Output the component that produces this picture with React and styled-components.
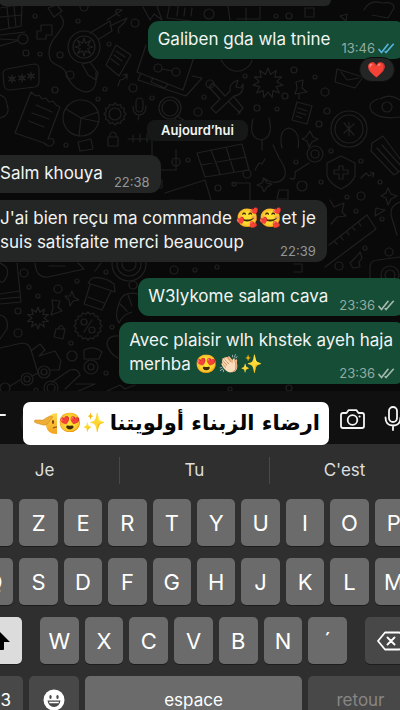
import React from "react";
import styled, { createGlobalStyle } from "styled-components";

const GlobalStyle = createGlobalStyle`
  *, *::before, *::after { box-sizing: border-box; }
  body {
    margin: 0;
    background: #0a0a0a;
    color: #f2f4f3;
    font-family: Inter, "Noto Sans", sans-serif;
    overflow: hidden;
  }
  button { font-family: inherit; color: inherit; border: 0; padding: 0; background: none; }
`;

const Screen = styled.div`
  display: flex;
  flex-direction: column;
  height: 100vh;
  min-height: 640px;
  overflow: hidden;
`;

/* ---------- chat ---------- */

const Chat = styled.main`
  position: relative;
  display: flex;
  flex-direction: column;
  flex: none;
  padding-bottom: 7px;
  overflow: hidden;
  background: #090909;
`;

const Wallpaper = styled.svg`
  position: absolute;
  inset: 0;
  width: 100%;
  height: 100%;
  fill: none;
  stroke: #202020;
  stroke-width: 1.2;
  stroke-linejoin: round;
  stroke-linecap: round;
`;

const Bubble = styled.article`
  position: relative;
  align-self: ${(p) => (p.$out ? "flex-end" : "flex-start")};
  margin: ${(p) => p.$gap || 0}px ${(p) => (p.$out ? -6 : 0)}px 0 ${(p) => (p.$out ? 0 : -10)}px;
  padding: 6px ${(p) => (p.$out ? 13 : 11)}px 8px 10px;
  border-radius: 11px;
  background: ${(p) => (p.$out ? "#154d37" : "#232625")};
  font-size: 17px;
  line-height: 24px;
  white-space: nowrap;
`;

const PastBubble = styled.div`
  position: relative;
  width: 83%;
  height: 6px;
  margin-left: -1px;
  border-radius: 0 0 11px 11px;
  background: #232625;
`;

const LastLine = styled.div`
  display: flex;
  align-items: flex-end;
  justify-content: space-between;
  gap: 11px;
`;

const Meta = styled.span`
  display: flex;
  align-items: center;
  gap: 3px;
  margin: 0 ${(p) => (p.$out ? -2 : 0)}px -4px 0;
  font-size: 13px;
  line-height: 14px;
  color: ${(p) => (p.$out ? "#93aba1" : "#949796")};
`;

const Emoji = styled.span`
  font-family: "Noto Color Emoji", sans-serif;
  font-size: 18px;
  line-height: 20px;
`;

const Reaction = styled.div`
  position: absolute;
  right: 11px;
  bottom: -23px;
  display: flex;
  align-items: center;
  justify-content: center;
  width: 36px;
  height: 25px;
  border: 1px solid #0d0f0e;
  border-radius: 13px;
  background: #232625;
  font: 15px/20px "Noto Color Emoji", sans-serif;
`;

const DayPill = styled.div`
  position: relative;
  align-self: center;
  margin: 61px 5px 0 0;
  padding: 0 14px;
  border-radius: 8px;
  background: #161717;
  font-size: 13px;
  font-weight: 600;
  line-height: 21px;
`;

/* ---------- composer ---------- */

const Composer = styled.form`
  position: relative;
  z-index: 1;
  display: flex;
  align-items: center;
  flex: none;
  height: 53px;
  margin: 0 -2px 0 -14px;
  padding-top: 6px;
  background: #101010;
`;

const IconButton = styled.button`
  display: flex;
  align-items: center;
  flex: none;
  margin-bottom: 4px;
  svg { display: block; fill: none; stroke: #f4f4f4; stroke-width: 2; stroke-linecap: round; stroke-linejoin: round; }
`;

const AddButton = styled(IconButton)`
  margin-bottom: 12px;
`;

const Field = styled.label`
  position: relative;
  flex: 1;
  margin: 2px 11px 0 15px;
`;

const TextBox = styled.input`
  display: block;
  width: 100%;
  height: 36px;
  border: 1px solid #242424;
  border-radius: 18px;
  background: #1a1a1a;
  outline: 0;
`;

const Caption = styled.p`
  position: absolute;
  inset: -2px 0 -5px 2px;
  display: flex;
  align-items: center;
  justify-content: flex-start;
  gap: 4px;
  margin: 0;
  padding: 0 9px;
  border-radius: 7px;
  background: #fff;
  color: #050505;
  font: 700 21px/36px "DejaVu Sans", sans-serif;
  white-space: nowrap;
  ${Emoji} { display: flex; align-items: center; font-size: 19px; font-weight: 400; }
`;

const Tools = styled.div`
  display: flex;
  align-items: center;
  gap: 19px;
`;

/* ---------- keyboard ---------- */

const Keyboard = styled.section`
  flex: 1;
  display: flex;
  flex-direction: column;
  gap: 12px;
  background: #2f2f2f;
`;

const Suggestions = styled.div`
  display: flex;
  align-items: center;
  flex: none;
  height: 43px;
  padding-top: 9px;
  margin: 0 -19px 0 -30px;
`;

const Suggestion = styled.button`
  flex: 1;
  height: 27px;
  font-size: 17px;
  line-height: 27px;
  color: #dedede;
  & + & { border-left: 1px solid #484848; }
`;

const KeyRow = styled.div`
  display: flex;
  flex: none;
  gap: 6px;
  margin: 0 -13px 0 -25px;
`;

const KeyGroup = styled.div`
  display: flex;
  flex: 1;
  gap: 6px;
  margin: 0 12px;
`;

const Key = styled.button`
  display: flex;
  align-items: center;
  justify-content: ${(p) => p.$align || "center"};
  flex: ${(p) => (p.$width ? `0 0 ${p.$width}px` : "1 1 0")};
  min-width: 0;
  height: 47px;
  border-radius: 5px;
  background: ${(p) => ({ dark: "#484848", light: "#dcdcdc" }[p.$tone] || "#6b6b6b")};
  box-shadow: 0 1px 0 #1d1d1d;
  color: ${(p) => (p.$dim ? "#868686" : "#fff")};
  font-size: ${(p) => (p.$word ? 17 : 22)}px;
  font-weight: 400;
  ${(p) => p.$pad && `padding: ${p.$pad};`}
`;

const Ticks = ({ color }) => (
  <svg width="17" height="11" viewBox="0 0 17 11" fill="none" stroke={color} strokeWidth="1.7" strokeLinecap="round" strokeLinejoin="round" aria-label="Distribué">
    <path d="M1 6.5 3.5 9.5 10 1.3M7.3 8.7 8 9.5 15.3 1.3" />
  </svg>
);

const burst = (cx, cy, outer, inner, n) => {
  const pts = [];
  for (let i = 0; i < n * 2; i += 1) {
    const r = i % 2 ? inner : outer;
    const a = (Math.PI * i) / n;
    pts.push(`${(cx + r * Math.sin(a)).toFixed(1)} ${(cy - r * Math.cos(a)).toFixed(1)}`);
  }
  return `M${pts.join("L")}Z`;
};

const dots = [
  [35, 16, 2], [78, 21, 2], [84, 7, 4], [135, 23, 4], [26, 53, 3], [40, 54, 2], [60, 55, 3], [109, 44, 2],
  [209, 14, 5], [276, 16, 2], [289, 16, 3], [55, 90, 3], [70, 75, 4], [98, 99, 2], [105, 89, 2], [133, 88, 4],
  [152, 98, 2], [204, 97, 2], [198, 112, 4], [210, 84, 4], [245, 76, 2], [257, 108, 3], [285, 96, 3], [294, 70, 3],
  [315, 77, 2], [325, 92, 4], [327, 111, 3], [277, 109, 2], [66, 145, 2], [319, 124, 3], [188, 160, 2],
  [247, 174, 4], [218, 188, 3], [302, 186, 5], [296, 162, 2], [331, 151, 2], [361, 161, 2], [321, 182, 2],
  [380, 182, 2], [361, 196, 4], [347, 197, 2], [356, 211, 2], [24, 273, 4], [29, 287, 2], [38, 296, 2], [58, 289, 4],
  [77, 281, 2], [106, 272, 2], [133, 285, 4], [18, 311, 3], [18, 333, 4], [71, 343, 2], [112, 327, 2], [72, 356, 5],
  [106, 373, 2], [382, 219, 2], [389, 252, 4], [365, 248, 2], [339, 266, 4], [174, 270, 4], [195, 270, 2], [217, 267, 2],
  [36, 390, 2], [176, 162, 4], [289, 388, 3], [230, 389, 2],
];

const Doodles = () => (
  <Wallpaper viewBox="0 0 400 392" preserveAspectRatio="xMidYMin slice" aria-hidden="true">
    {dots.map(([x, y, r]) => <circle key={`${x}-${y}`} cx={x} cy={y} r={r} />)}
    {/* basket, pixels and cable */}
    <path d="M0 8 22 4 21 26 0 30M7 7 9 28M14 6 16 27M0 17 22 15M0 35 25 32M0 39 17 40M0 46 17 41" />
    <circle cx="23" cy="39" r="5" />
    <path d="M41 25H52V35H46V39H37V31H41Z" />
    <path d="M48 8 57 5 62 11 54 17ZM60 15C72 28 49 35 49 52 49 69 62 62 66 73 71 91 93 100 96 82V72" />
    {/* lens with handle and wrench */}
    <circle cx="84" cy="47" r="16" /><circle cx="84" cy="47" r="11" /><path d={burst(84, 47, 9, 4, 8)} />
    <path d="M82 64 90 62 98 73 96 80 88 75ZM90 33 110 21 112 31 99 39M107 20 122 10C114 7 114 14 120 16M110 26 127 18C122 29 116 25 119 33" />
    <path d="M116 45 131 55 119 76 106 65ZM116 51 125 57M114 55 122 61M111 59 119 65" />
    <path d="M118 86 120 80 124 79 127 74M123 75 127 74 127 79" />
    {/* code box */}
    <path d="M7 69 34 64Q39 64 39 69L39 82Q39 86 35 87L10 90Q5 90 4 85L3 74Q3 70 7 69Z" />
    <path d={burst(12, 79, 4, 1, 6)} /><path d={burst(22, 78, 4, 1, 6)} /><path d={burst(31, 76, 4, 1, 6)} />
    {/* receipt, chart, gear */}
    <path d="M31 92 36 96 39 95 42 99 46 98 49 102 53 101 56 105 60 107 48 139Q54 137 54 143 50 149 44 143L15 133ZM36 105 52 112M32 113 49 119M29 121 44 127" />
    <circle cx="81" cy="118" r="18" /><path d="M81 118 66 109M81 118 79 136M81 118 98 112M81 118 99 122" />
    <path d={burst(115, 114, 11, 9, 12)} /><circle cx="115" cy="114" r="6" />
    <rect x="136" y="98" width="7" height="14" rx="4" /><path d="M133 106Q133 115 139 115 146 115 146 106M139 115 138 120" />
    <path d="M108 137H118V146H108ZM110 137V134Q113 130 116 134V137" />
    <circle cx="170" cy="108" r="11" /><circle cx="170" cy="108" r="8" /><path d="M177 116 185 121 181 126 175 119M0 95Q7 97 7 105 11 115 0 118" />
    {/* laptop */}
    <path d="M146 45 137 72 183 90 194 57M141 73 138 80 186 96 202 78 192 76M153 78 168 84 165 88 151 82Z" />
    <circle cx="158" cy="68" r="4" /><circle cx="176" cy="72" r="4" /><path d="M162 69 172 71" />
    <path d="M143 7 150 20 154 14 162 20 157 6M170 3 167 18 198 22M178 6 177 16M185 8 184 16M192 8 191 16M230 20 228 6M237 19H260V7M246 8V20" />
    {/* crossed tools */}
    <path d="M209 87 213 83 225 96 230 91Q229 83 238 80L236 87 241 88 243 84Q244 95 234 96L216 113 211 108 220 99ZM229 102 240 113M234 97 243 108 238 114" />
    <path d={burst(268, 83, 15, 9, 11)} />
    <path d="M221 60Q230 75 243 70 251 66 252 60M337 69 363 77 355 88 335 82ZM341 72 347 80 359 78" />
    <path d="M296 82 303 80 302 88 307 92 295 94 297 88ZM299 94 299 99" />
    <path d="M297 102 312 106 307 124 292 120ZM298 108 307 111M297 112 306 115M296 116 302 118" />
    <circle cx="349" cy="129" r="18" /><circle cx="349" cy="129" r="14" /><path d="M344 123 354 135M354 124 344 133M349 122V136" />
    <path d="M305 8H314V17H305ZM340 16 347 14 346 21ZM364 10Q370 -1 382 3 394 1 394 8L388 18 372 15M380 99Q390 93 400 100M372 112Q366 103 378 99M372 112Q381 120 400 117" />
    <circle cx="387" cy="107" r="5" />
    {/* stethoscope and steps */}
    <path d="M253 119Q248 138 261 140 274 138 269 118M262 140V150M282 148Q278 130 289 128 301 131 298 148M306 137 310 131 313 137 318 139 312 142 309 147 307 141 302 139Z" />
    <path d="M128 139H152V170H176V150M133 135V142M140 134V142M147 134V142M197 153 242 144 249 170 205 177ZM211 150 220 174M226 147 234 172M201 165 246 157M78 142 91 139 93 149 80 151Z" />
    <path d="M255 170 259 163 262 164 265 159M263 178Q276 186 283 179 289 172 279 158L273 145M290 178Q296 182 295 172L309 163" />
    <circle cx="315" cy="154" r="8" /><circle cx="315" cy="154" r="4" />
    <path d="M341 156 355 163V176Q352 184 341 189 330 184 327 176V163ZM339 166H343V170H348V174H343V179H339V174H334V170H339ZM361 178 366 173 369 176 374 173M370 172 374 173 373 177" />
    <path d="M372 143 383 136 400 159M372 143 371 151 394 175 400 171M377 148 398 171M382 145 400 165" />
    <path d="M388 188 391 194 397 196 391 199 388 205 386 198 381 196 386 193ZM264 178 267 183 272 184 267 187 264 192 262 187 257 185 262 183Z" />
    <path d="M162 180V188H155M232 183H250V202M165 193 205 180 211 200M170 200H194M279 190H288V199H277Z" />
    <circle cx="234" cy="184" r="2" />
    <path d="M330 200 334 207 344 203 342 212 346 216 337 217 331 224M376 208 385 210 375 216ZM400 202Q390 205 391 215L397 235" />
    <path d="M329 245 367 215 376 229 325 267M335 242 337 244M341 237 343 240M347 232 349 235M353 228 355 230M359 223 361 226" />
    <path d="M356 257 360 252 362 258 359 262 360 267 353 268 350 263ZM370 278V266Q371 260 378 260L400 257M294 264H302V272H294" />
    <circle cx="390" cy="275" r="9" /><circle cx="390" cy="275" r="5" />
    {/* van, cup, badge and other small things */}
    <path d="M0 263Q10 267 7 276 3 285 0 281M17 263 21 302 0 304M0 294 19 291M0 299 20 297M35 263Q36 278 48 277L84 269 78 263M49 266H65M101 263 95 271" />
    <circle cx="129" cy="264" r="17" /><circle cx="129" cy="264" r="12" /><circle cx="129" cy="264" r="7" />
    <path d="M92 278Q104 276 114 284L115 292 88 283ZM90 285 84 304 102 310 111 291M88 297 104 303" />
    <path d="M72 291 74 297 79 300 73 301 70 306 69 300 65 296 70 296Z" /><path d={burst(38, 318, 11, 6, 10)} />
    <path d="M52 300 60 301 58 307 62 311 51 315 53 308ZM56 329H65L63 339 54 337ZM58 329Q61 322 64 329" />
    <path d={burst(88, 326, 14, 12, 16)} /><circle cx="84" cy="322" r="3" /><circle cx="92" cy="330" r="3" /><path d="M92 320 84 332" />
    <path d="M138 294Q123 290 119 303 114 317 119 323 123 314 132 312M120 304 127 311M128 295 132 306M0 315Q9 317 7 329L0 339" />
    <path d="M0 348 22 343Q29 343 31 350L38 373 32 376M20 380 10 386M32 350 40 344 45 350 39 356 55 351 61 361 59 370 50 370M38 373H39" />
    <circle cx="27" cy="379" r="6" /><circle cx="27" cy="379" r="3" /><circle cx="44" cy="372" r="6" /><circle cx="44" cy="372" r="3" /><circle cx="5" cy="388" r="5" />
    <path d="M84 350Q94 345 102 352L99 359H84ZM107 345Q107 335 118 336M107 345Q110 354 118 358" /><circle cx="91" cy="367" r="7" /><circle cx="91" cy="367" r="3" />
    <path d="M52 382 70 370Q78 368 80 375L65 389M76 392 95 384H76M105 392 120 385 125 389 135 385" /><circle cx="51" cy="388" r="7" /><circle cx="51" cy="388" r="4" />
  </Wallpaper>
);

/* Half of a yellow face, with a hand raised to its brow */
const Salute = () => (
  <svg width="24" height="23" viewBox="0 0 24 23" aria-label="Salut">
    <defs>
      <linearGradient id="skin" x1="0" y1="0" x2="0" y2="1">
        <stop offset="0" stopColor="#ffdc4e" /><stop offset="1" stopColor="#f2a01e" />
      </linearGradient>
    </defs>
    <path d="M23 1Q12 2 12 12T23 22Z" fill="url(#skin)" />
    <ellipse cx="19" cy="10" rx="1" ry="2" fill="#6b3c0a" />
    <path d="M19 16Q21 15 23 15" stroke="#8c500d" strokeWidth="1.2" fill="none" />
    <path d="M1 8Q-1 10 2 11L9 13Q13 14 15 10L19 5Q16 3 12 6L9 8Z" fill="#eeae35" stroke="#cf8420" strokeWidth=".5" />
  </svg>
);

const Camera = () => (
  <svg width="25" height="20" viewBox="0 0 25 20" aria-hidden="true">
    <path d="M3 4H6.5L8.500 1.200H16.500L18.500 4H22Q24 4 24 6V17Q24 19 22 19H3Q1 19 1 17V6Q1 4 3 4Z" strokeWidth="1.8" />
    <circle cx="12.5" cy="11" r="4.8" strokeWidth="1.8" /><path d="M19.5 7.5H19.6" />
  </svg>
);

const Mic = () => (
  <svg width="18" height="25" viewBox="0 0 18 25" aria-hidden="true">
    <rect x="5" y="1" width="8" height="15" rx="4" strokeWidth="1.8" /><path d="M1.5 11.5Q1.5 19.5 9 19.5T16.5 11.5M9 20V24" strokeWidth="1.8" />
  </svg>
);

const Letters = ({ row }) => row.split("").map((c) => <Key key={c} type="button">{c}</Key>);

export default function App() {
  return (
    <Screen>
      <GlobalStyle />
      <Chat>
        <Doodles />
        <PastBubble />
        <Bubble $out $gap={15}>
          <LastLine>
            Galiben gda wla tnine
            <Meta $out>13:46 <Ticks color="#54b4dc" /></Meta>
          </LastLine>
          <Reaction>❤️</Reaction>
        </Bubble>
        <DayPill>Aujourd’hui</DayPill>
        <Bubble $gap={14}>
          <LastLine>
            Salm khouya
            <Meta>22:38</Meta>
          </LastLine>
        </Bubble>
        <Bubble $gap={7}>
          J'ai bien reçu ma commande <Emoji>🥰🥰</Emoji>et je
          <LastLine>
            suis satisfaite merci beaucoup
            <Meta>22:39</Meta>
          </LastLine>
        </Bubble>
        <Bubble $out $gap={16}>
          <LastLine>
            W3lykome salam cava
            <Meta $out>23:36 <Ticks color="#a3b8af" /></Meta>
          </LastLine>
        </Bubble>
        <Bubble $out $gap={6}>
          Avec plaisir wlh khstek ayeh haja
          <LastLine>
            <span>merhba <Emoji>😍👏🏻✨</Emoji></span>
            <Meta $out>23:36 <Ticks color="#a3b8af" /></Meta>
          </LastLine>
        </Bubble>
      </Chat>

      <Composer onSubmit={(e) => e.preventDefault()}>
        <AddButton type="button" aria-label="Ajouter">
          <svg width="20" height="20" viewBox="0 0 20 20"><path d="M1 10H19M10 1V19" /></svg>
        </AddButton>
        <Field>
          <TextBox type="text" aria-label="Message" />
          <Caption dir="rtl">
            <span>ارضاء الزبناء أولويتنا</span>
            <Emoji>✨<span>😍</span><Salute /></Emoji>
          </Caption>
        </Field>
        <Tools>
          <IconButton type="button" aria-label="Appareil photo"><Camera /></IconButton>
          <IconButton type="button" aria-label="Message vocal"><Mic /></IconButton>
        </Tools>
      </Composer>

      <Keyboard>
        <Suggestions>
          <Suggestion type="button">Je</Suggestion>
          <Suggestion type="button">Tu</Suggestion>
          <Suggestion type="button">C'est</Suggestion>
        </Suggestions>
        <KeyRow>
          <Key type="button" aria-label="A" />
          <Letters row="ZERTYUIOP" />
        </KeyRow>
        <KeyRow><Letters row="QSDFGHJKLM" /></KeyRow>
        <KeyRow>
          <Key type="button" $tone="light" $width={47} aria-label="Majuscule">
            <svg width="24" height="22" viewBox="0 0 24 22" fill="#000"><path d="M12 1 23 12H17V19Q17 20 16 20H8Q7 20 7 19V12H1Z" /></svg>
          </Key>
          <KeyGroup><Letters row="WXCVBN´" /></KeyGroup>
          <Key type="button" $tone="dark" $width={48} aria-label="Effacer">
            <svg width="25" height="20" viewBox="0 0 25 20" fill="none" stroke="#fff" strokeWidth="1.8" strokeLinejoin="round" strokeLinecap="round">
              <path d="M8 1.5H22Q24 1.5 24 3.5V16.5Q24 18.5 22 18.5H8L1 10ZM10.5 6.5 17.5 13.5M17.5 6.5 10.5 13.5" />
            </svg>
          </Key>
        </KeyRow>
        <KeyRow>
          <Key type="button" $tone="dark" $word $width={48} $align="flex-end" $pad="0 12px 0 0">123</Key>
          <Key type="button" $tone="dark" $width={50} aria-label="Emoji">
            <svg width="22" height="22" viewBox="0 0 22 22">
              <circle cx="11" cy="11" r="10.5" fill="#fff" />
              <ellipse cx="7.5" cy="8" rx="1.2" ry="1.9" fill="#484848" /><ellipse cx="14.5" cy="8" rx="1.2" ry="1.9" fill="#484848" />
              <path d="M4.5 11.5H17.5Q16.5 18 11 18T4.5 11.5Z" fill="#484848" /><path d="M6 12.700H16L15.5 14.2H6.5Z" fill="#fff" />
            </svg>
          </Key>
          <Key type="button" $word>espace</Key>
          <Key type="button" $tone="dark" $word $dim $width={105}>retour</Key>
        </KeyRow>
      </Keyboard>
    </Screen>
  );
}
